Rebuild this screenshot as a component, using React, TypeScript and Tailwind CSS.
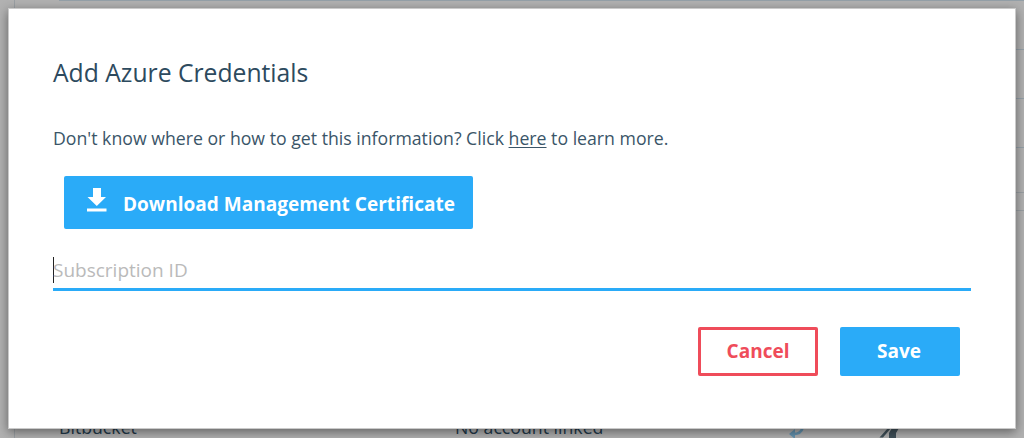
import React, { useState } from 'react';

const LinkedAccounts: React.FC = () => {
  return (
    <div className="h-full pl-3.5">
      {/* Previous section */}
      <div className="h-[193px] border-l border-b border-[#9a9fa3] pl-11">
        <div className="h-px bg-[#94a0a8]" />
        <div className="h-[49px] border-b border-[#94a0a8]" />
        <div className="h-[49px] border-b border-[#94a0a8]" />
        <div className="h-[49px] border-b border-[#94a0a8]" />
      </div>

      {/* Accounts section */}
      <div className="mt-[17px] flex h-[240px] items-start border-l border-t border-[#9a9fa3] pl-11 pt-[202px] text-[17.7px] leading-7 text-[#22394a]">
        <span className="w-[396px]">Bitbucket</span>
        <span className="w-[331px]">No account linked</span>
        <svg className="mt-[5px] w-[92px] shrink-0" width="92" height="20" viewBox="0 0 92 20" fill="none">
          <path d="M-2 11.5h2" stroke="#6594b0" strokeWidth="2" />
          <path d="M16.5 10c-1 4-4 6-9 6" stroke="#6594b0" strokeWidth="2.8" />
          <path d="M9 11L3 16l6 5z" fill="#6594b0" />
        </svg>
        <svg className="mt-[5px] shrink-0" width="24" height="20" viewBox="0 0 24 20">
          <path d="M10 10h3L5 19.5H1.5z" fill="#405059" />
          <path d="M14 10h7l-3 5v5h-7v-5z" fill="#405059" />
        </svg>
      </div>
    </div>
  );
};

const DownloadIcon: React.FC = () => (
  <svg width="20" height="24" viewBox="0 0 20 24" fill="#fff" className="shrink-0">
    <path d="M6 0h8v9h5L9.8 18 .5 9H6z" />
    <path d="M0 20.5h19.5v3H0z" />
  </svg>
);

const CredentialsModal: React.FC = () => {
  const [subscriptionId, setSubscriptionId] = useState<string>('');

  return (
    <div className="absolute left-[9px] top-[9px] h-[419px] w-[1006px] bg-white px-11 pt-[46px] shadow-[0_0_0_1px_#cacaca,0_3px_10px_1px_rgba(0,0,0,0.45)]">
      <h2 className="text-[24.7px] leading-9 text-[#2d4a5e]">Add Azure Credentials</h2>

      <p className="mt-[33px] text-[17.7px] leading-7 text-[#3a5568]">
        Don't know where or how to get this information? Click{' '}
        <a className="cursor-pointer underline decoration-1 underline-offset-2">here</a> to learn more.
      </p>

      <button className="ml-[11px] mt-[24px] flex h-[53px] w-[409px] items-center rounded-[2px] bg-[#2aabf8] pl-[23px] text-[19px] font-bold text-white">
        <span className="-mt-1.5 mr-4">
          <DownloadIcon />
        </span>
        <span className="whitespace-nowrap pt-[3px] tracking-[0.02px]">Download Management Certificate</span>
      </button>

      {/* Subscription field */}
      <div className="mt-[23px] flex h-[39px] w-[918px] items-start border-b-3 border-[#2aabf8] pt-1">
        <span className="mt-px h-[26px] w-px shrink-0 bg-[#222]" />
        <input
          type="text"
          placeholder="Subscription ID"
          value={subscriptionId}
          onChange={(e) => setSubscriptionId(e.target.value)}
          className="-ml-px h-7 w-full bg-transparent text-[19px] text-[#2d4a5e] outline-none placeholder:text-[#bababa]"
        />
      </div>

      {/* Actions */}
      <div className="mr-[11px] mt-[36px] flex justify-end gap-[22px] text-[19px] font-bold">
        <button className="h-[49px] w-[120px] rounded-[2px] border-3 border-[#ef4c5a] text-[#ef4c5a]">Cancel</button>
        <button className="h-[49px] w-[120px] rounded-[2px] bg-[#2aabf8] pr-[2px] text-white">Save</button>
      </div>
    </div>
  );
};

const App: React.FC = () => {
  return (
    <div className="relative h-[438px] w-[1024px] overflow-hidden bg-[#b1b1b1] font-['Open_Sans',sans-serif]">
      <LinkedAccounts />
      <CredentialsModal />
    </div>
  );
};

export default App;
